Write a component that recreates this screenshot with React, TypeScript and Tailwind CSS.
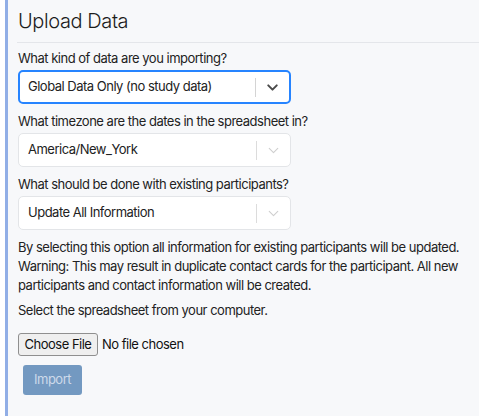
import React from 'react';
import { ChevronDown } from 'lucide-react';
import { clsx } from 'clsx';

interface SelectBoxProps {
  value: string;
  focused?: boolean;
}

const SelectBox: React.FC<SelectBoxProps> = ({ value, focused }) => (
  <div
    className={clsx(
      'flex h-[34px] w-[273px] items-center rounded-[5px] bg-white',
      focused ? 'border-2 border-[#2684ff]' : 'border border-[#e3e5e8]'
    )}
  >
    <div className={clsx('flex-1 text-[#222]', focused ? 'pl-[8px]' : 'pl-[9px]')}>{value}</div>
    <span className={clsx('h-[19px] w-px', focused ? 'bg-[#d4d4d4]' : 'bg-[#dcdcdc]')} />
    <div className="flex w-[33px] items-center justify-center">
      <ChevronDown
        size={17}
        strokeWidth={focused ? 2.8 : 1.6}
        className={focused ? 'text-[#4a4a4a]' : 'text-[#cfcfcf]'}
      />
    </div>
  </div>
);

const Field: React.FC<{ label: string; children: React.ReactNode }> = ({ label, children }) => (
  <div className="flex flex-col">
    <label className="mb-[2px] leading-[20px] text-[#222]">{label}</label>
    {children}
  </div>
);

export default function App() {
  return (
    <div
      className="flex h-[416px] w-[479px] overflow-hidden bg-white text-[13px] tracking-[-0.5px]"
      style={{ fontFamily: 'Inter, "Noto Sans", sans-serif' }}
    >
      {/* accent strip */}
      <div className="ml-[5px] w-[3px] bg-[#91aee6]" />
      <div className="flex-1 bg-[#f7f8fa] pl-[9px] pt-[6px]">
        <h1 className="pl-[1px] text-[20px] font-light leading-[30px] tracking-[-0.4px] text-[#1c1c1c]">
          Upload Data
        </h1>
        <div className="mt-[6px] h-px bg-[#e4e6ea]" />

        <div className="mt-[5px] flex flex-col gap-[7px] pl-[1px]">
          <Field label="What kind of data are you importing?">
            <SelectBox value="Global Data Only (no study data)" focused />
          </Field>
          <Field label="What timezone are the dates in the spreadsheet in?">
            <SelectBox value="America/New_York" />
          </Field>
          <Field label="What should be done with existing participants?">
            <SelectBox value="Update All Information" />
          </Field>
        </div>

        <p className="mt-[8px] pl-[1px] pr-[10px] leading-[19px] text-[#222]">
          By selecting this option all information for existing participants will be updated. Warning: This
          may result in duplicate contact cards for the participant. All new participants and contact
          information will be created.
        </p>
        <p className="mt-[6px] pl-[1px] leading-[19px] text-[#222]">Select the spreadsheet from your computer.</p>

        <div className="mt-[13px] flex items-center pl-[1px]">
          <button className="h-[23px] w-[80px] rounded-[3px] border border-[#8f8f8f] bg-[#efefef] text-[#111]">
            Choose File
          </button>
          <span className="ml-[4px] text-[#111]">No file chosen</span>
        </div>

        <button
          disabled
          className="ml-[6px] mt-[9px] h-[30px] w-[59px] rounded-[3px] bg-[#7399c1] text-[#cddaea]"
        >
          Import
        </button>
      </div>
    </div>
  );
}
